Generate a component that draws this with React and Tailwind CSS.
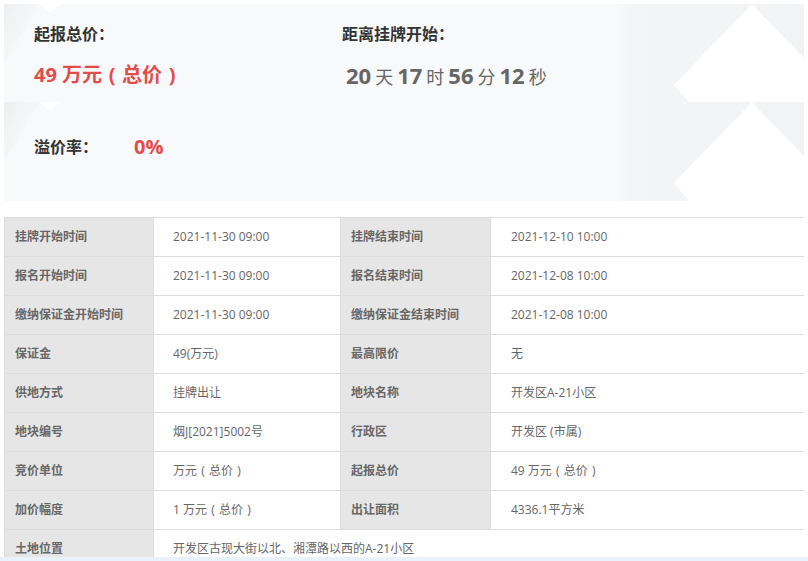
import React from 'react';

// fullwidth paren, centred in its em box like the original font draws it
const P = ({ c }) => <span className="inline-block w-[1em] text-center">{c}</span>;

const Total = ({ pre }) => (
  <>
    {pre}万元<P c="(" />总价<P c=")" />
  </>
);

const rows = [
  ['挂牌开始时间', '2021-11-30 09:00', '挂牌结束时间', '2021-12-10 10:00'],
  ['报名开始时间', '2021-11-30 09:00', '报名结束时间', '2021-12-08 10:00'],
  ['缴纳保证金开始时间', '2021-11-30 09:00', '缴纳保证金结束时间', '2021-12-08 10:00'],
  ['保证金', '49(万元)', '最高限价', '无'],
  ['供地方式', '挂牌出让', '地块名称', '开发区A-21小区'],
  ['地块编号', '烟J[2021]5002号', '行政区', '开发区 (市属)'],
  ['竞价单位', <Total pre="" />, '起报总价', <Total pre="49 " />],
  ['加价幅度', <Total pre="1 " />, '出让面积', '4336.1平方米'],
];

const font = { fontFamily: '"Open Sans", "Noto Sans CJK SC", sans-serif' };

const Backdrop = () => (
  <svg className="absolute inset-0 w-full h-full" viewBox="0 0 800 197" preserveAspectRatio="none">
    <defs>
      <linearGradient id="band" x1="0" y1="0" x2="1" y2="0">
        <stop offset="0" stopColor="#f8f9fa" />
        <stop offset="0.77" stopColor="#f8f9fa" />
        <stop offset="0.78" stopColor="#f4f5f6" />
        <stop offset="1" stopColor="#f2f3f4" />
      </linearGradient>
      <linearGradient id="leftShade" x1="0" y1="0" x2="1" y2="1">
        <stop offset="0" stopColor="#eceef0" />
        <stop offset="1" stopColor="#f8f9fa" stopOpacity="0" />
      </linearGradient>
    </defs>
    <rect x="0" y="0" width="800" height="197" fill="url(#band)" />
    <polygon points="0,0 36,0 0,60" fill="url(#leftShade)" />
    <polygon points="0,98 36,98 0,158" fill="url(#leftShade)" />
    <polygon points="36,0 56,0 46,9" fill="#ffffff" />
    <polygon points="36,98 56,98 46,107" fill="#ffffff" />
    <polygon points="670,81 748,0 800,54 800,98 685,98" fill="#ffffff" />
    <polygon points="670,179 748,98 800,152 800,197 685,197" fill="#ffffff" />
  </svg>
);

export default function App() {
  return (
    <div className="w-[808px] h-[561px] bg-white overflow-hidden" style={font}>
      <div className="px-[4px] pt-[4px]">
        {/* summary panel */}
        <div className="relative h-[197px] overflow-hidden">
          <Backdrop />
          <div className="relative flex pl-[30px]">
            <div className="w-[308px]">
              <div className="pt-[19px] text-[16px] leading-[22px] font-bold text-[#333]">起报总价：</div>
              <div className="mt-[16px] text-[20px] leading-[28px] font-bold text-[#e24c4b]">
                <Total pre="49 " />
              </div>
              <div className="mt-[47px] flex items-center leading-[22px]">
                <span className="w-[100px] text-[16px] font-bold text-[#333]">溢价率：</span>
                <span className="text-[20px] font-bold text-[#e24c4b]">0%</span>
              </div>
            </div>
            <div>
              <div className="pt-[19px] text-[16px] leading-[22px] font-bold text-[#333]">距离挂牌开始：</div>
              <div className="mt-[16px] pl-[4px] flex items-baseline gap-[4px] leading-[28px] text-[#666]">
                <span className="text-[22px] font-bold">20</span>
                <span className="text-[18px]">天</span>
                <span className="text-[22px] font-bold">17</span>
                <span className="text-[18px]">时</span>
                <span className="text-[22px] font-bold">56</span>
                <span className="text-[18px]">分</span>
                <span className="text-[22px] font-bold">12</span>
                <span className="text-[18px]">秒</span>
              </div>
            </div>
          </div>
        </div>

        {/* detail table */}
        <div className="mt-[16px] h-[340px] overflow-hidden">
          <table className="w-[800px] table-fixed border-collapse text-[12px] text-[#666]">
            <colgroup>
              <col className="w-[149px]" />
              <col className="w-[187px]" />
              <col className="w-[150px]" />
              <col className="w-[314px]" />
            </colgroup>
            <tbody>
              {rows.map((r) => (
                <tr key={r[0]} className="h-[39px]">
                  <td className="border border-[#dddddd] bg-[#e6e6e6] pl-[10px] font-bold">{r[0]}</td>
                  <td className="border border-[#dddddd] pl-[19px]">{r[1]}</td>
                  <td className="border border-[#dddddd] bg-[#e6e6e6] pl-[10px] font-bold">{r[2]}</td>
                  <td className="border border-[#dddddd] pl-[20px]">{r[3]}</td>
                </tr>
              ))}
              <tr className="h-[39px]">
                <td className="border border-[#dddddd] bg-[#e6e6e6] pl-[10px] font-bold">土地位置</td>
                <td colSpan={3} className="border border-[#dddddd] pl-[19px]">开发区古现大街以北、湘潭路以西的A-21小区</td>
              </tr>
            </tbody>
          </table>
        </div>
      </div>
      <div className="h-[8px] bg-[#e9f2fb]" />
    </div>
  );
}
